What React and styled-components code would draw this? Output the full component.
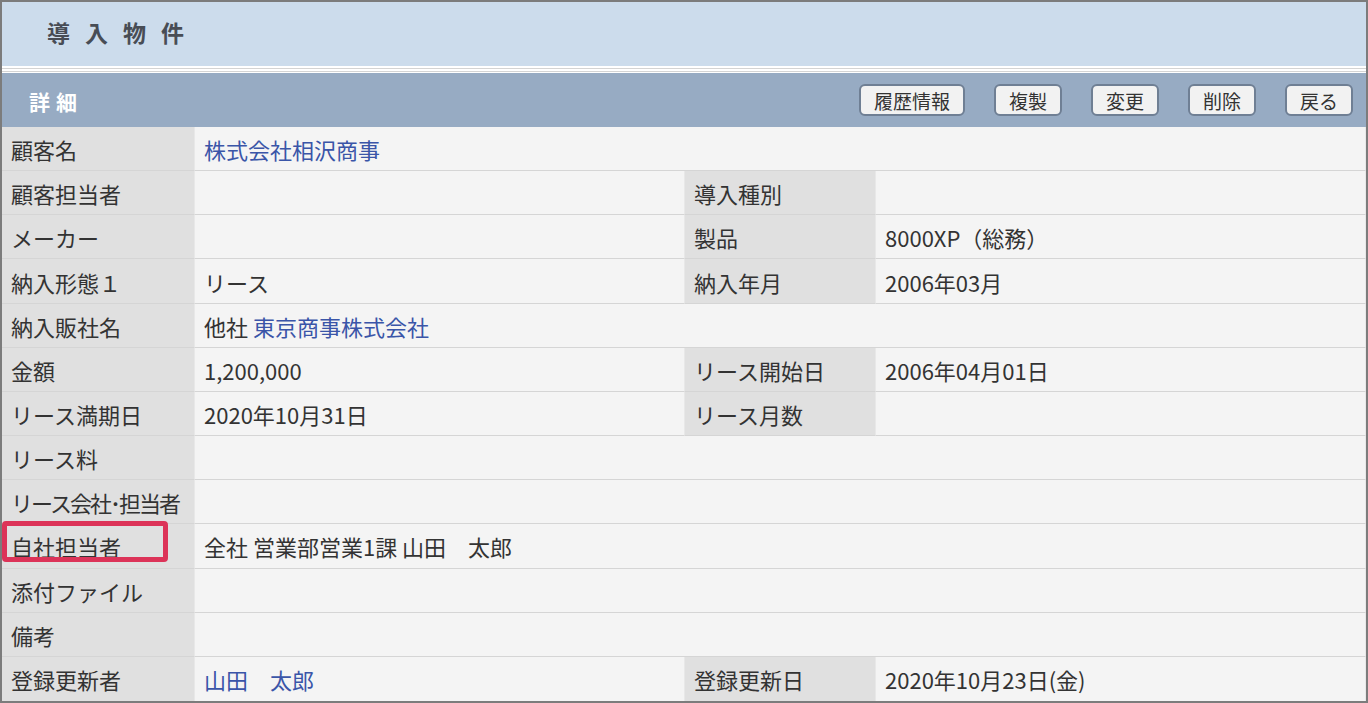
import React from 'react'
import styled, { createGlobalStyle } from 'styled-components'

const GlobalStyle = createGlobalStyle`
  html, body {
    margin: 0;
    padding: 0;
    background: #ffffff;
  }
  body {
    font-family: "Noto Sans CJK JP", "Noto Sans", sans-serif;
  }
`

const Frame = styled.div`
  position: relative;
  box-sizing: border-box;
  width: 1368px;
  height: 703px;
  border: 2px solid #7c7c7c;
  background: #ffffff;
  overflow: hidden;
  display: flex;
  flex-direction: column;
`

const PageHeader = styled.header`
  box-sizing: border-box;
  flex: 0 0 64px;
  background: #ccdcec;
  display: flex;
  align-items: center;
  padding: 0 0 5px 45px;
`

const PageTitle = styled.h1`
  margin: 0;
  font-size: 23px;
  font-weight: 700;
  color: #484d55;
  letter-spacing: 15px;
`

const DoubleRule = styled.div`
  flex: 0 0 2px;
  margin: 2px 0 1px;
  border-top: 1px solid #d4d4d4;
  border-bottom: 1px solid #d4d4d4;
  background: #ffffff;
`

const SectionBar = styled.div`
  flex: 0 0 54px;
  background: #97abc3;
  display: flex;
  align-items: center;
  justify-content: space-between;
  padding: 0 13px 0 27px;
`

const SectionTitle = styled.h2`
  margin: 0;
  padding-top: 2px;
  font-size: 21px;
  font-weight: 700;
  color: #ffffff;
  letter-spacing: 6px;
`

const Toolbar = styled.div`
  display: flex;
  gap: 29px;
`

const Button = styled.button`
  box-sizing: border-box;
  height: 32px;
  padding: 0 13px;
  border: 2px solid #6f7f94;
  border-radius: 6px;
  background: #f2f2f2;
  font-family: inherit;
  font-size: 19px;
  line-height: 1;
  color: #333333;
  cursor: pointer;
`

const Grid = styled.div`
  flex: 1;
  display: grid;
  grid-template-columns: 193px 490px 191px 1fr;
  grid-auto-rows: 1fr;
`

const Cell = styled.div`
  box-sizing: border-box;
  display: flex;
  align-items: center;
  padding: 1px 0 0 9px;
  border-bottom: 1px solid #d5d5d5;
  border-right: 1px solid #e8e8e8;
  font-size: 22px;
  white-space: nowrap;
  color: #333333;
  letter-spacing: ${p => (p.$tight ? '-2px' : 'normal')};
  grid-column: ${p => (p.$span ? 'span 3' : 'auto')};
  background: ${p => (p.$label ? '#e0e0e0' : '#f4f4f4')};

  &:nth-last-child(-n + 4) {
    border-bottom: none;
  }
`

const Link = styled.a`
  color: #3a55a8;
  text-decoration: none;
`

const Highlight = styled.div`
  position: absolute;
  left: 0;
  top: 519px;
  width: 166px;
  height: 41px;
  box-sizing: border-box;
  border: 5px solid #dc3358;
  border-radius: 4px;
  pointer-events: none;
`

const rows = [
  [['顧客名', <Link href="#">株式会社相沢商事</Link>]],
  [['顧客担当者', ''], ['導入種別', '']],
  [['メーカー', ''], ['製品', '8000XP（総務）']],
  [['納入形態１', 'リース'], ['納入年月', '2006年03月']],
  [['納入販社名', <>他社 <Link href="#">東京商事株式会社</Link></>]],
  [['金額', '1,200,000'], ['リース開始日', '2006年04月01日']],
  [['リース満期日', '2020年10月31日'], ['リース月数', '']],
  [['リース料', '']],
  [['リース会社･担当者', '']],
  [['自社担当者', '全社 営業部営業1課 山田　太郎']],
  [['添付ファイル', '']],
  [['備考', '']],
  [['登録更新者', <Link href="#">山田　太郎</Link>], ['登録更新日', '2020年10月23日(金)']],
]

function DetailRow({ pairs }) {
  const single = pairs.length === 1
  return pairs.map(([label, value], i) => (
    <React.Fragment key={i}>
      <Cell $label $tight={label.length > 8}>{label}</Cell>
      <Cell $span={single}>
        <span>{value}</span>
      </Cell>
    </React.Fragment>
  ))
}

export default function App() {
  return (
    <>
      <GlobalStyle />
      <Frame>
        <PageHeader>
          <PageTitle>導入物件</PageTitle>
        </PageHeader>
        <DoubleRule />
        <SectionBar>
          <SectionTitle>詳細</SectionTitle>
          <Toolbar>
            <Button>履歴情報</Button>
            <Button>複製</Button>
            <Button>変更</Button>
            <Button>削除</Button>
            <Button>戻る</Button>
          </Toolbar>
        </SectionBar>
        <Grid>
          {rows.map((pairs, i) => (
            <DetailRow key={i} pairs={pairs} />
          ))}
        </Grid>
        <Highlight />
      </Frame>
    </>
  )
}
